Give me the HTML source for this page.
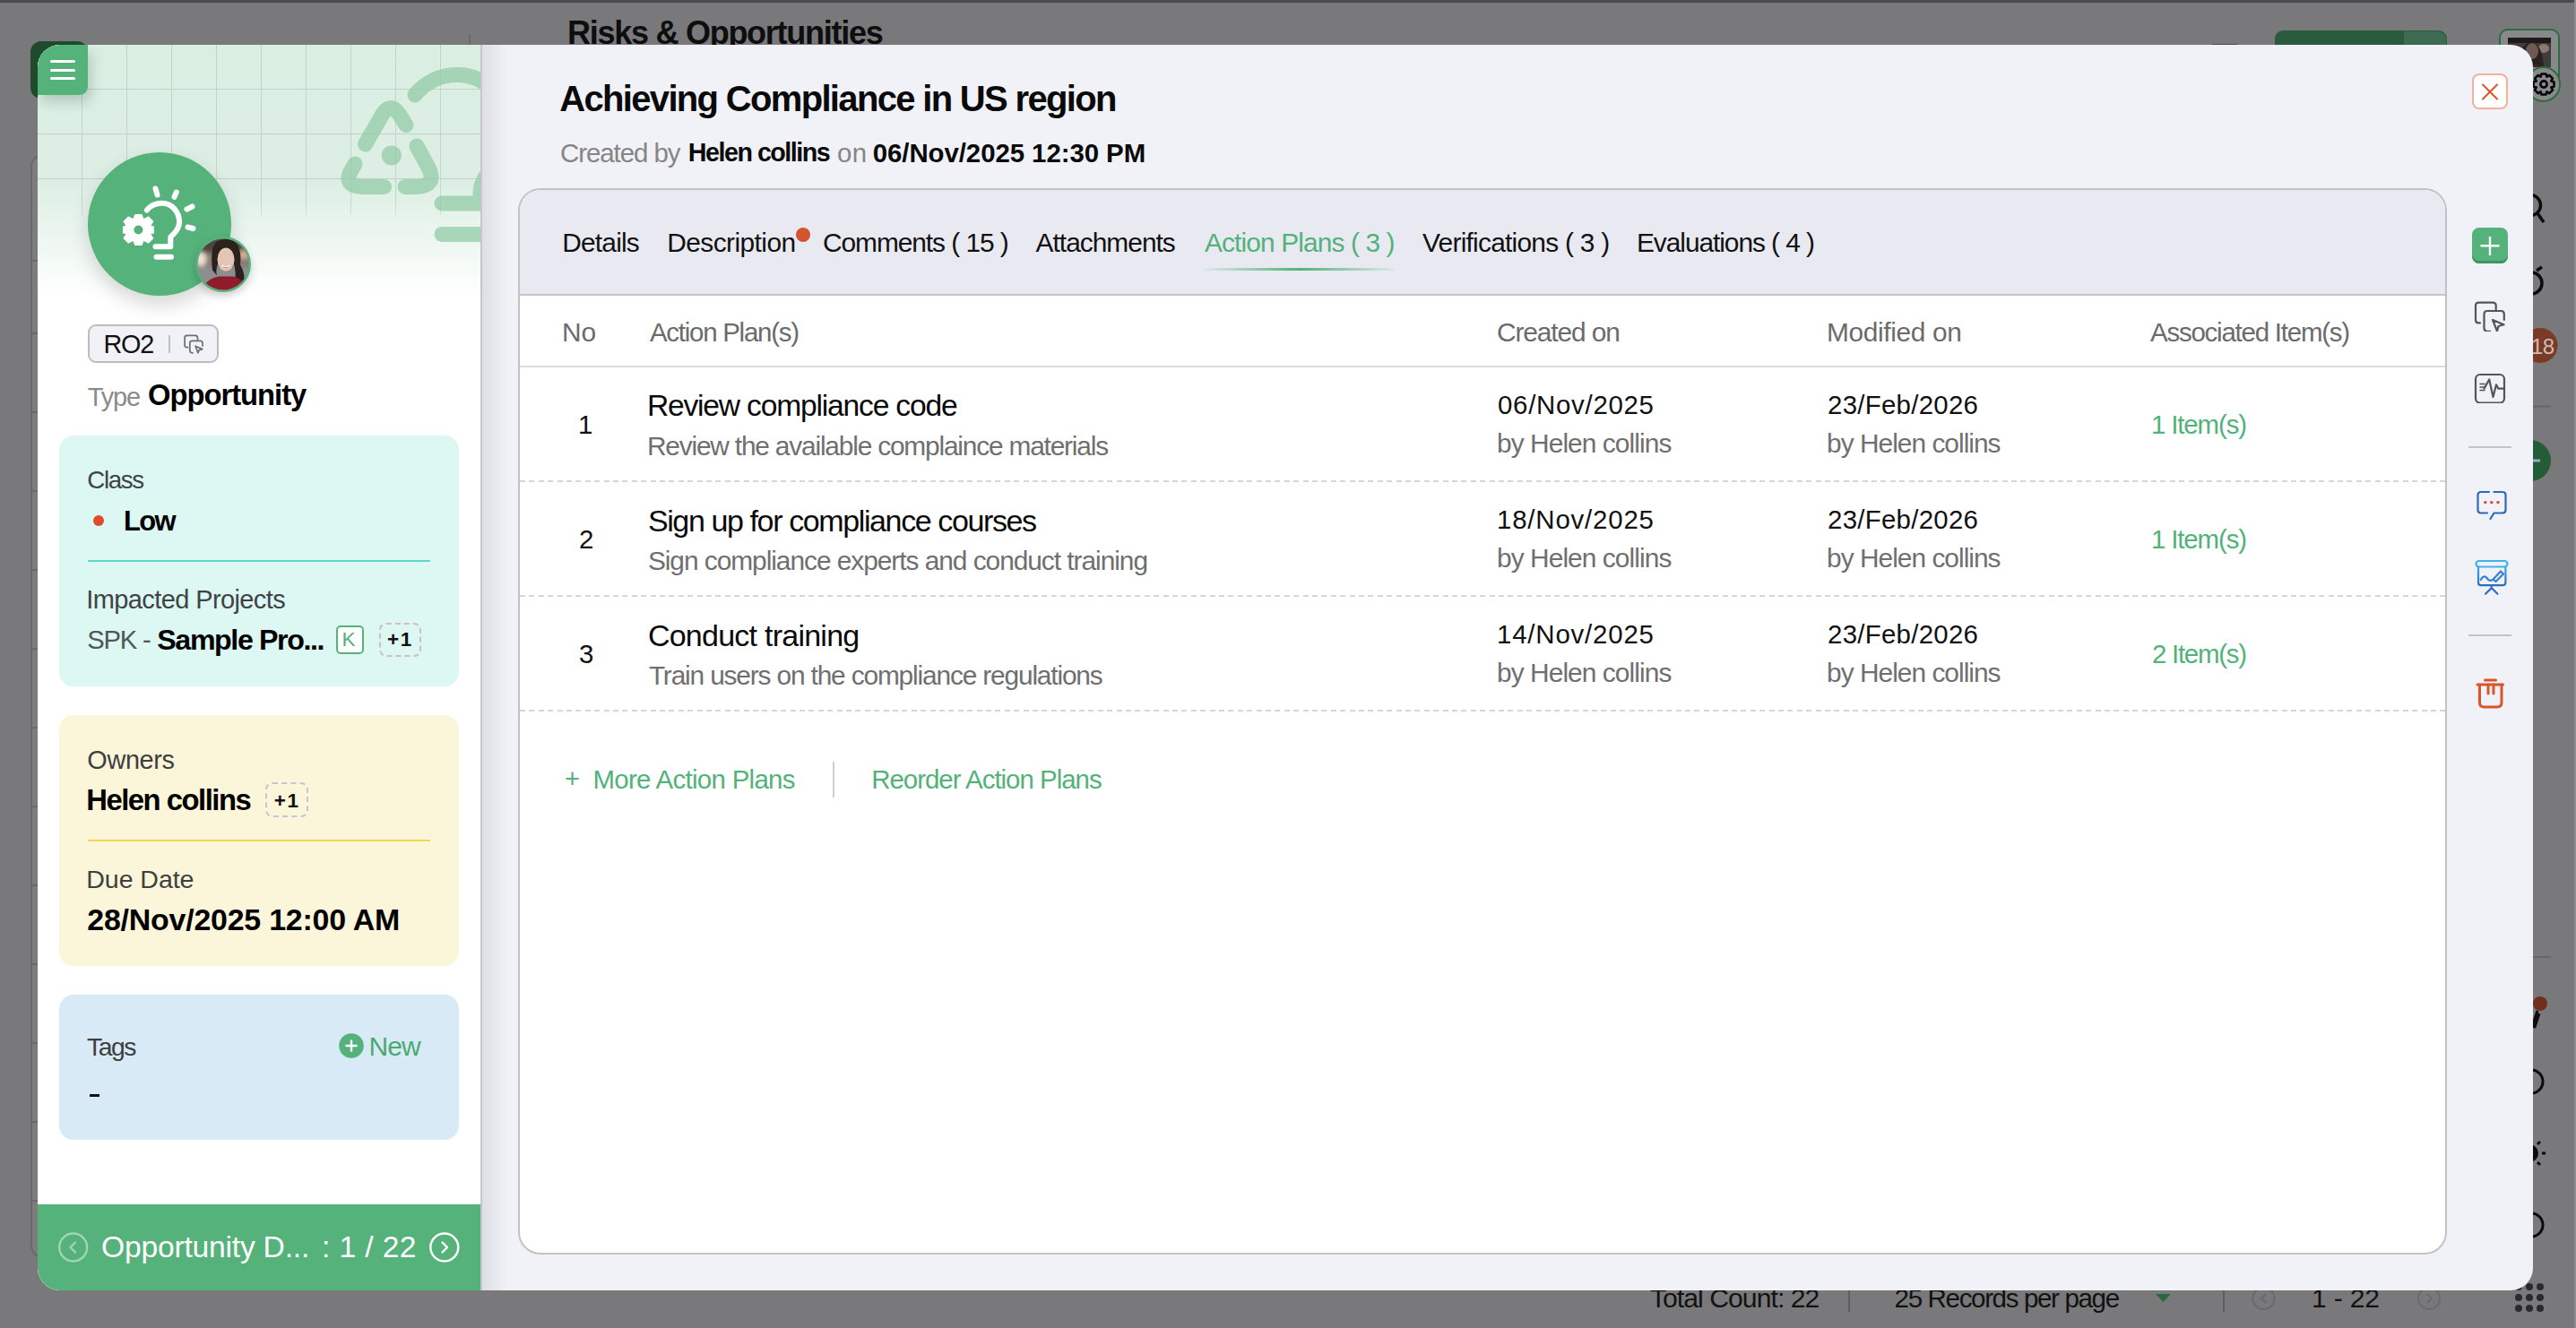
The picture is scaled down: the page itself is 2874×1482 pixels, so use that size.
<!DOCTYPE html>
<html><head><meta charset="utf-8">
<style>
html,body{margin:0;padding:0;}
body{width:2874px;height:1482px;overflow:hidden;position:relative;background:#79797b;font-family:"Liberation Sans",sans-serif;}
.a{position:absolute;}
.tx{position:absolute;white-space:nowrap;line-height:1;font-family:"Liberation Sans", sans-serif;}
</style></head><body>
<!-- ===== page behind overlay ===== -->
<div class="a" style="left:0;top:0;width:2874px;height:2.5px;background:#4a4a4c"></div>
<div class="a" style="left:2872px;top:0;width:2px;height:1482px;background:#8e8e90"></div>
<div class="a" style="left:523px;top:38px;width:2px;height:14px;background:#6a6a6c"></div>
<div class="a" style="left:34px;top:46px;width:64px;height:64px;border-radius:12px;background:#1f4a2b"></div>
<div class="a" style="left:34px;top:172px;width:40px;height:1232px;border:2px solid #6a6a6c;border-right:none;border-radius:14px 0 0 14px;background:#7d7d7f;box-sizing:border-box"></div>
<div class="a" style="left:36px;top:290px;width:10px;height:2px;background:#6a6a6c"></div>
<div class="a" style="left:36px;top:371px;width:10px;height:2px;background:#6a6a6c"></div>
<div class="a" style="left:36px;top:459px;width:10px;height:2px;background:#6a6a6c"></div>
<div class="a" style="left:36px;top:547px;width:10px;height:2px;background:#6a6a6c"></div>
<div class="a" style="left:36px;top:635px;width:10px;height:2px;background:#6a6a6c"></div>
<div class="a" style="left:36px;top:723px;width:10px;height:2px;background:#6a6a6c"></div>
<div class="a" style="left:36px;top:811px;width:10px;height:2px;background:#6a6a6c"></div>
<div class="a" style="left:36px;top:899px;width:10px;height:2px;background:#6a6a6c"></div>
<div class="a" style="left:36px;top:987px;width:10px;height:2px;background:#6a6a6c"></div>
<div class="a" style="left:36px;top:1075px;width:10px;height:2px;background:#6a6a6c"></div>
<div class="a" style="left:36px;top:1163px;width:10px;height:2px;background:#6a6a6c"></div>
<div class="a" style="left:36px;top:1251px;width:10px;height:2px;background:#6a6a6c"></div>
<div class="a" style="left:36px;top:1339px;width:10px;height:2px;background:#6a6a6c"></div>
<div class="a" style="left:2538px;top:34px;width:192px;height:30px;border-radius:9px;background:#2b5b3d"></div>
<div class="a" style="left:2682px;top:35px;width:47px;height:30px;border-radius:0 9px 0 0;background:#3e6a52"></div>
<div class="a" style="left:2788px;top:32px;width:68px;height:70px;border:2.3px solid #2d6b43;border-radius:10px;background:#89898b;box-sizing:border-box"></div>
<svg class="a" style="left:2798px;top:42px" width="48" height="33" viewBox="0 0 48 33">
 <rect width="48" height="33" fill="#3e3c3c"/><rect y="0" width="48" height="6" fill="#1e1a1a"/>
 <ellipse cx="40" cy="12" rx="6" ry="5" fill="#8a7a70"/>
 <path d="M14 33 Q12 6 26 5 Q38 6 40 33Z" fill="#2a201d"/>
 <ellipse cx="27" cy="15" rx="7" ry="9" fill="#6e5a52"/>
 <path d="M18 33 Q27 26 38 33Z" fill="#4a1e22"/>
</svg>
<div class="a" style="left:2818px;top:74.4px;width:39.2px;height:39.2px;border:2.3px solid #2d6b43;border-radius:50%;background:#89898b;box-sizing:border-box"></div>
<svg class="a" style="left:2824px;top:80px" width="28" height="28" viewBox="-14 -14 28 28" fill="none" stroke="#050505" stroke-width="2.6" stroke-linejoin="round">
 <path d="M-2.6 -11.5L2.6 -11.5L3.4 -8.4L6.3 -10.1L10 -6.4L8.3 -3.5L11.5 -2.6L11.5 2.6L8.3 3.5L10 6.4L6.3 10.1L3.4 8.4L2.6 11.5L-2.6 11.5L-3.4 8.4L-6.3 10.1L-10 6.4L-8.3 3.5L-11.5 2.6L-11.5 -2.6L-8.3 -3.5L-10 -6.4L-6.3 -10.1L-3.4 -8.4Z" transform="translate(0 0)"/>
 <circle cx="0" cy="0" r="3.6"/>
</svg>
<!-- right page icons -->
<svg class="a" style="left:2800px;top:200px" width="74" height="600" viewBox="2800 200 74 600" fill="none" stroke="#0c0c0c" stroke-width="3.5">
 <circle cx="2823" cy="229" r="11.5"/><path d="M2831 238l7 10"/>
 <circle cx="2824" cy="316" r="12"/><path d="M2830 302l6-4"/>
 <circle cx="2834" cy="385.5" r="19.5" fill="#7a3a26" stroke="none"/>
 <path d="M2826 453.5h20" stroke="#666" stroke-width="2"/>
 <circle cx="2823" cy="514" r="23" fill="#255c38" stroke="none"/>
 <path d="M2822 514h12" stroke="#9ab" stroke-width="3"/>
</svg>
<div class="a" style="left:2824px;top:375px;font-size:24px;color:#cdbdb5;line-height:1;letter-spacing:-0.5px">18</div>
<svg class="a" style="left:2800px;top:1050px" width="74" height="432" viewBox="2800 1050 74 432" fill="none" stroke="#0c0c0c" stroke-width="3">
 <path d="M2826 1068h20" stroke="#666" stroke-width="2"/>
 <circle cx="2834" cy="1120" r="8" fill="#6f2f1c" stroke="none"/>
 <path d="M2831 1128l-5 15q-1 3 2 3l5-15"/>
 <circle cx="2824" cy="1207" r="13"/>
 <circle cx="2822" cy="1287" r="10" fill="#0c0c0c" stroke="none"/><path d="M2836 1287h4M2831 1277l3-3M2831 1297l3 3"/>
 <circle cx="2824" cy="1367" r="13"/>
 <g fill="#2a2a2a" stroke="none"><circle cx="2810" cy="1436" r="4"/><circle cx="2822" cy="1436" r="4"/><circle cx="2834" cy="1436" r="4"/><circle cx="2810" cy="1448" r="4"/><circle cx="2822" cy="1448" r="4"/><circle cx="2834" cy="1448" r="4"/><circle cx="2810" cy="1460" r="4"/><circle cx="2822" cy="1460" r="4"/><circle cx="2834" cy="1460" r="4"/></g>
</svg>
<!-- bottom page bar -->
<div class="a" style="left:2062px;top:1440px;width:2px;height:24px;background:#5f5f61"></div>
<div class="a" style="left:2480px;top:1440px;width:2px;height:24px;background:#5f5f61"></div>
<svg class="a" style="left:2400px;top:1440px" width="30" height="20"><path d="M5 4h17l-8.5 9z" fill="#256a3c"/></svg>
<svg class="a" style="left:2505px;top:1430px" width="220" height="40" viewBox="2505 1430 220 40" fill="none" stroke="#6a6a6c" stroke-width="2"><circle cx="2525.5" cy="1449" r="12"/><path d="M2528 1444l-5 5 5 5"/><circle cx="2710" cy="1449" r="12"/><path d="M2708 1444l5 5-5 5"/></svg>
<div class="a" style="left:2468px;top:48.5px;width:28px;height:2px;background:#4a4a4c"></div>
<div id='t0' class='tx' style='left:633.00px;top:18.84px;font-size:36.07px;font-weight:700;letter-spacing:-1.300px;color:#0e0e0e;'>Risks &amp; Opportunities</div>
<div id='t64' class='tx' style='left:1840.90px;top:1433.98px;font-size:30.14px;font-weight:400;letter-spacing:-0.943px;color:#121212;'>Total Count: 22</div>
<div id='t65' class='tx' style='left:2113.60px;top:1434.46px;font-size:29.57px;font-weight:400;letter-spacing:-1.367px;color:#121212;'>25 Records per page</div>
<div id='t66' class='tx' style='left:2578.90px;top:1433.98px;font-size:30.14px;font-weight:400;letter-spacing:-0.160px;color:#121212;'>1 - 22</div>

<!-- ===== modal ===== -->
<div class="a" id="modal" style="left:42px;top:50px;width:2784px;height:1390px;border-radius:25px;overflow:hidden;background:#f1f2f7">
  <!-- left panel -->
  <div class="a" style="left:0;top:0;width:494px;height:1390px;background:#fff">
    <div class="a" style="left:0;top:0;width:494px;height:282px;background:linear-gradient(180deg,#dbeee2 0%,#ddefe4 55%,#ffffff 100%)"></div>
    <svg class="a" style="left:0;top:0" width="494" height="200">
      <defs><linearGradient id="gf" x1="0" y1="0" x2="0" y2="1"><stop offset="0" stop-color="#c2d2c7"/><stop offset="0.9" stop-color="#c6d6cb"/><stop offset="1" stop-color="#d0ded4"/></linearGradient></defs>
      <g fill="url(#gf)">
        <rect x="49" y="0" width="1" height="190"/><rect x="99" y="0" width="1" height="190"/><rect x="149" y="0" width="1" height="190"/><rect x="199" y="0" width="1" height="190"/><rect x="249" y="0" width="1" height="190"/><rect x="299" y="0" width="1" height="190"/><rect x="349" y="0" width="1" height="190"/><rect x="399" y="0" width="1" height="190"/><rect x="449" y="0" width="1" height="190"/>
      </g>
      <g fill="#c2d2c7"><rect x="0" y="49" width="494" height="1"/><rect x="0" y="99" width="494" height="1"/><rect x="0" y="149" width="494" height="1"/></g>
    </svg>
    <!-- decorative icon -->
    <svg class="a" style="left:0;top:0" width="494" height="290" viewBox="42 50 494 290" fill="none" stroke="#8fcba4" stroke-width="17" stroke-linecap="round" stroke-linejoin="round" opacity="0.72">
      <path d="M407.5 161 L427 127 Q436 114 445 127 L453 139.5"/>
      <path d="M465 163 L479 189 Q487 208 464 208.5 L452 208.5"/>
      <path d="M396 183 L392 190 Q382 208 405 208.5 L428.5 208.5"/>
      <circle cx="436.8" cy="173.4" r="11" fill="#8fcba4" stroke="none"/>
      <path d="M463 106 A59 59 0 0 1 560 112"/>
      <path d="M493 227 L540 227"/>
      <path d="M493 261.5 L540 261.5"/>
      <path d="M536 224 L536 215 Q536 200 552 186"/>
    </svg>
    <!-- menu button -->
    <div class="a" style="left:0;top:0;width:56px;height:56px;background:#55b27b;border-radius:24px 0 9px 0;box-shadow:4px 8px 14px rgba(0,40,20,0.18)">
      <div class="a" style="left:14px;top:17px;width:28px;height:3px;border-radius:2px;background:#fff"></div>
      <div class="a" style="left:14px;top:26.5px;width:28px;height:3px;border-radius:2px;background:#fff"></div>
      <div class="a" style="left:14px;top:36px;width:28px;height:3px;border-radius:2px;background:#fff"></div>
    </div>
    <!-- big circle -->
    <div class="a" style="left:56px;top:120px;width:160px;height:160px;border-radius:50%;background:#55b27b;box-shadow:0 10px 22px rgba(0,0,0,0.16)"></div>
    <svg class="a" style="left:56px;top:120px" width="160" height="160" viewBox="98 170 160 160" fill="none" stroke="#fff" stroke-width="6" stroke-linecap="round" stroke-linejoin="round">
      <path d="M163.9 234.6 C168 229 174 226.7 180.8 226.7 C191.5 226.7 200.1 236 200.1 248.1 C200.1 255 196 259.5 190.3 264.4 L190.3 275.2 L173.4 275.2"/>
      <path d="M174.5 286.8 L191 286.8"/>
      <path d="M173.5 210.5 L175.5 217.5"/><path d="M196.8 214.5 L194.5 219.8"/><path d="M214.5 230.5 L208.5 233.5"/><path d="M215.5 255 L209.5 253.5"/>
      <g stroke="none" fill="#fff" transform="translate(154.4 256.5)">
        <path d="M-4 -17.5 L4 -17.5 L6 -12.5 L11.3 -15.2 L17 -9.5 L14 -4.6 L17.5 -4 L17.5 4 L14 4.6 L17 9.5 L11.3 15.2 L6 12.5 L4 17.5 L-4 17.5 L-6 12.5 L-11.3 15.2 L-17 9.5 L-14 4.6 L-17.5 4 L-17.5 -4 L-14 -4.6 L-17 -9.5 L-11.3 -15.2 L-6 -12.5 Z"/>
      </g>
      <circle cx="154.4" cy="256.5" r="5" fill="#55b27b" stroke="none"/>
    </svg>
    <!-- avatar -->
    <div class="a" style="left:175.7px;top:213.7px;width:62.2px;height:62.2px;border-radius:50%;background:#55b27b;box-shadow:0 4px 10px rgba(0,0,0,0.2);overflow:hidden">
      <svg width="62" height="62" viewBox="0 0 62 62">
        <defs><clipPath id="av"><circle cx="31" cy="31" r="28.5"/></clipPath><filter id="bl" x="-20%" y="-20%" width="140%" height="140%"><feGaussianBlur stdDeviation="2.5"/></filter><filter id="bl2"><feGaussianBlur stdDeviation="0.7"/></filter></defs>
        <g clip-path="url(#av)">
          <rect width="62" height="62" fill="#8c8a88"/>
          <g filter="url(#bl)">
            <rect x="0" y="0" width="62" height="18" fill="#4e4240"/>
            <rect x="0" y="18" width="62" height="16" fill="#8a7c74"/>
            <ellipse cx="6" cy="25" rx="6" ry="8" fill="#eee2d0"/>
            <ellipse cx="54" cy="20" rx="7" ry="5" fill="#d8ae8c"/>
            <rect x="0" y="34" width="62" height="28" fill="#8e8e90"/>
          </g>
          <g filter="url(#bl2)" transform="translate(0 -2.5)">
            <path d="M19 40 Q16 14 24 8 Q34 3 44 8 Q52 16 50 34 Q56 44 54 54 L44 52 Q46 40 42 30 L26 30 Q22 40 24 46 Z" fill="#2b201d"/>
            <ellipse cx="34" cy="28" rx="9.5" ry="13" fill="#e4c4b2"/>
            <path d="M28 34 Q34 40 40 34 Q34 36 28 34Z" fill="#c0283a"/>
            <path d="M29 34.5 Q34 37 39 34.5" stroke="#fff" stroke-width="1.4" fill="none"/>
            <path d="M6 66 Q10 50 26 47 L42 47 Q56 50 60 66Z" fill="#8e1b2a"/>
          </g>
        </g>
      </svg>
    </div>
    <!-- RO2 badge -->
    <div class="a" style="left:56px;top:312px;width:146px;height:43px;border:2px solid #bdbdbf;border-radius:9px;background:#f1f2f7;box-sizing:border-box"></div>
    <div class="a" style="left:146px;top:324px;width:2px;height:20px;background:#c2c2c4"></div>
    <svg class="a" style="left:160px;top:322px" width="28" height="26" viewBox="0 0 28 26" fill="none" stroke="#6e6e72" stroke-width="1.7" stroke-linejoin="round" stroke-linecap="round">
      <path d="M7.5 15.7H6.8Q4.1 15.7 4.1 13V5Q4.1 2.3 6.8 2.3H15.8Q18.5 2.3 18.5 5V7"/>
      <path d="M13 21.8H12.5Q9.8 21.8 9.8 19.1V11.1Q9.8 8.4 12.5 8.4H21.3Q24 8.4 24 11.1V14"/>
      <path d="M16.1 14.2L23.7 17.6L20.2 18.6L18.8 21.8Z"/>
    </svg>
    <!-- cards -->
    <div class="a" style="left:24px;top:436px;width:446px;height:280px;border-radius:16px;background:#ddf7f2"></div>
    <div class="a" style="left:56px;top:574.5px;width:382px;height:2.4px;background:#5bd8c8"></div>
    <div class="a" style="left:61.8px;top:524.9px;width:12px;height:12px;border-radius:50%;background:#dd4a2e"></div>
    <div class="a" style="left:332.5px;top:648.4px;width:31.3px;height:31.3px;border:2px solid #55b27b;border-radius:5px;background:#fff;box-sizing:border-box"></div>
    <div class="a" style="left:380.6px;top:644.7px;width:47px;height:38.7px;border:2px dashed #cdbfc4;border-radius:8px;box-sizing:border-box"></div>
    <div class="a" style="left:24px;top:748px;width:446px;height:280px;border-radius:16px;background:#fbf5d9"></div>
    <div class="a" style="left:56px;top:886.8px;width:382px;height:2.4px;background:#f0d75a"></div>
    <div class="a" style="left:254px;top:823.4px;width:48px;height:38.9px;border:2px dashed #c4c6d0;border-radius:8px;box-sizing:border-box"></div>
    <div class="a" style="left:24px;top:1060px;width:446px;height:161.5px;border-radius:16px;background:#d9eaf7"></div>
    <svg class="a" style="left:336px;top:1103px" width="28" height="28" viewBox="0 0 28 28"><circle cx="14" cy="14" r="13.8" fill="#55b27b"/><path d="M14 7.5v13M7.5 14h13" stroke="#fff" stroke-width="2.4"/></svg>
    <div class="a" style="left:57.8px;top:1170.5px;width:11px;height:3.2px;background:#111"></div>
    <!-- footer -->
    <div class="a" style="left:0;top:1294px;width:494px;height:96px;background:#55b27b"></div>
    <svg class="a" style="left:0;top:1294px" width="494" height="96" viewBox="42 1344 494 96" fill="none" stroke-width="2.4" stroke-linecap="round" stroke-linejoin="round">
      <circle cx="81.7" cy="1392" r="15.5" stroke="#ffffff" stroke-opacity="0.45"/><path d="M84 1386.5l-5.5 5.5 5.5 5.5" stroke="#ffffff" stroke-opacity="0.45"/>
      <circle cx="495.8" cy="1392" r="15.5" stroke="#fff"/><path d="M493.5 1386.5l5.5 5.5-5.5 5.5" stroke="#fff"/>
    </svg>
  </div>
  <!-- divider + shadow -->
  <div class="a" style="left:494px;top:0;width:2px;height:1390px;background:#c6c6ca"></div>
  <div class="a" style="left:496px;top:0;width:30px;height:1390px;background:linear-gradient(90deg,rgba(170,172,185,0.26),rgba(241,242,247,0))"></div>
  <!-- close -->
  <div class="a" style="left:2716px;top:32px;width:40px;height:39.5px;border:2px solid #f2b19c;border-radius:8px;background:#fff;box-sizing:border-box"></div>
  <svg class="a" style="left:2716px;top:32px" width="40" height="40"><path d="M12 12.5L28 28.5M28 12.5L12 28.5" stroke="#d9532b" stroke-width="2" stroke-linecap="round"/></svg>
  <!-- tab container -->
  <div class="a" style="left:536px;top:160px;width:2152px;height:1190px;border:2px solid #c2c2c6;border-radius:25px;background:#fff;box-sizing:border-box;overflow:hidden">
    <div class="a" style="left:0;top:0;width:2151px;height:116px;background:#e9e9f2;border-bottom:2px solid #c6c6ca"></div>
    <div class="a" style="left:763px;top:87px;width:213px;height:3px;border-radius:2px;background:linear-gradient(90deg,rgba(82,178,122,0.05),#52b27a 50%,rgba(82,178,122,0.05))"></div>
    <div class="a" style="left:0;top:196px;width:2151px;height:2px;background:#dcdcde"></div>
    <div class="a" style="left:0;top:324px;width:2151px;height:2px;background:repeating-linear-gradient(90deg,#d6d6d8 0 6px,transparent 6px 10.4px)"></div>
    <div class="a" style="left:0;top:452px;width:2151px;height:2px;background:repeating-linear-gradient(90deg,#d6d6d8 0 6px,transparent 6px 10.4px)"></div>
    <div class="a" style="left:0;top:580px;width:2151px;height:2px;background:repeating-linear-gradient(90deg,#d6d6d8 0 6px,transparent 6px 10.4px)"></div>
    <div class="a" style="left:349px;top:638px;width:2px;height:40px;background:#cfcfd2"></div>
  </div>
  <div class="a" style="left:846px;top:204px;width:16px;height:16px;border-radius:50%;background:#d05530"></div>
  <!-- right toolbar -->
  <div class="a" style="left:2716px;top:204px;width:40px;height:40px;border-radius:8px;background:#55b27b;box-shadow:inset 0 -3px 0 #3f9463"></div>
  <svg class="a" style="left:2716px;top:204px" width="40" height="40"><path d="M20 10v21M9.5 20.3h21" stroke="#fff" stroke-width="2.4"/></svg>
  <svg class="a" style="left:2716px;top:280px" width="40" height="40" viewBox="2758 330 40 40" fill="none" stroke="#555558" stroke-width="2.2" stroke-linejoin="round" stroke-linecap="round">
    <path d="M2767 360.4H2765.5Q2762 360.4 2762 357V341Q2762 337.6 2765.5 337.6H2781Q2784.7 337.6 2784.7 341V346"/>
    <path d="M2778 369.8H2775Q2771.5 369.8 2771.5 366.3V350.5Q2771.5 347 2775 347H2790.3Q2793.8 347 2793.8 350.5V357"/>
    <path d="M2781 357L2793.5 362.3L2787.5 364L2786 369.5Z"/>
  </svg>
<svg class="a" style="left:2716px;top:360px" width="40" height="40" viewBox="2758 410 40 40" fill="none" stroke="#555558" stroke-width="2.2" stroke-linejoin="round" stroke-linecap="round">
    <rect x="2762" y="418" width="32" height="31.6" rx="5"/>
    <path d="M2767 428.5h5M2767 432h5M2767 435.5h5" stroke-width="1.6"/>
    <path d="M2771.5 433.6L2777.2 423.5L2781.5 443L2785 429.3L2787.2 433.6H2793"/>
  </svg>
  <div class="a" style="left:2712px;top:448px;width:48px;height:2px;background:#c4c4c6"></div>
  <svg class="a" style="left:2716px;top:492px" width="40" height="40" viewBox="2758 542 40 40" fill="none" stroke-width="2.2" stroke-linejoin="round" stroke-linecap="round">
    <path d="M2777 549H2768Q2764.5 549 2764.5 552.5V569Q2764.5 572.5 2768 572.5H2775M2782.5 549H2792Q2795.5 549 2795.5 552.5V569Q2795.5 572.5 2792 572.5H2782.5L2778.5 579" stroke="#2e68b8"/>
    <g fill="#e03b3b" stroke="none"><circle cx="2772.8" cy="560.6" r="1.7"/><circle cx="2779.8" cy="560.6" r="1.7"/><circle cx="2787" cy="560.6" r="1.7"/></g>
  </svg>
  <svg class="a" style="left:2716px;top:570px" width="45" height="45" viewBox="2758 620 45 45" fill="none" stroke-width="2.2" stroke-linejoin="round" stroke-linecap="round">
    <defs><linearGradient id="pg" x1="0" y1="0" x2="0" y2="1"><stop offset="0" stop-color="#3da8e6"/><stop offset="1" stop-color="#2f6cc4"/></linearGradient></defs>
    <rect x="2762.5" y="626" width="35" height="6.5" rx="3.2" stroke="#3fb2ea"/>
    <path d="M2765 632.7V650Q2765 653.1 2768 653.1H2792.4Q2795.4 653.1 2795.4 650V632.7" stroke="url(#pg)"/>
    <path d="M2767.7 647.1Q2771 641 2774.5 645Q2778 650 2781.6 646.5" stroke="#3480cc"/>
    <path d="M2781.6 646.5L2790 637.5L2793 640.5L2784.5 649Z" stroke="#3480cc"/>
    <path d="M2779.8 653.1V656.1L2773 662.8M2779.8 656.1L2786.4 662.8" stroke="#2f6cc4"/>
  </svg>
  <div class="a" style="left:2712px;top:657.5px;width:48px;height:2px;background:#c4c4c6"></div>
  <svg class="a" style="left:2716px;top:704px" width="40" height="40" viewBox="2758 754 40 40" fill="none" stroke="#d9552b" stroke-width="3" stroke-linejoin="round" stroke-linecap="round">
    <path d="M2764 764h28.5"/><path d="M2772.5 759h12"/><path d="M2766.5 764v20q0 5 5 5h14.5q5 0 5-5v-20"/><path d="M2776 764v10M2782 764v10"/>
  </svg>
</div>
<div id='t1' class='tx' style='left:115.60px;top:370.42px;font-size:28.80px;font-weight:400;letter-spacing:-1.300px;color:#111;'>RO2</div>
<div id='t2' class='tx' style='left:97.80px;top:428.70px;font-size:28.94px;font-weight:400;letter-spacing:-1.133px;color:#8b8b8b;'>Type</div>
<div id='t3' class='tx' style='left:165.10px;top:425.46px;font-size:32.75px;font-weight:700;letter-spacing:-1.020px;color:#000;'>Opportunity</div>
<div id='t4' class='tx' style='left:97.30px;top:521.95px;font-size:27.71px;font-weight:400;letter-spacing:-1.350px;color:#3e4444;'>Class</div>
<div id='t5' class='tx' style='left:137.90px;top:566.91px;font-size:30.93px;font-weight:700;letter-spacing:-1.600px;color:#000;'>Low</div>
<div id='t6' class='tx' style='left:96.30px;top:654.56px;font-size:28.99px;font-weight:400;letter-spacing:-0.600px;color:#3e4444;'>Impacted Projects</div>
<div id='t7' class='tx' style='left:97.30px;top:700.48px;font-size:29.20px;font-weight:400;letter-spacing:-1.200px;color:#4f5757;'>SPK -</div>
<div id='t8' class='tx' style='left:175.30px;top:697.94px;font-size:32.18px;font-weight:700;letter-spacing:-1.383px;color:#000;'>Sample Pro...</div>
<div id='t9' class='tx' style='left:432.00px;top:702.91px;font-size:22.46px;font-weight:700;letter-spacing:1.600px;color:#111;'>+1</div>
<div id='t10' class='tx' style='left:381.50px;top:702.91px;font-size:22.46px;font-weight:400;letter-spacing:0.000px;color:#52b27a;'>K</div>
<div id='t11' class='tx' style='left:97.30px;top:833.89px;font-size:28.84px;font-weight:400;letter-spacing:-0.320px;color:#3e4040;'>Owners</div>
<div id='t12' class='tx' style='left:96.30px;top:877.23px;font-size:32.79px;font-weight:700;letter-spacing:-1.483px;color:#000;'>Helen collins</div>
<div id='t13' class='tx' style='left:305.80px;top:882.71px;font-size:22.46px;font-weight:700;letter-spacing:1.600px;color:#111;'>+1</div>
<div id='t14' class='tx' style='left:96.30px;top:966.73px;font-size:28.55px;font-weight:400;letter-spacing:-0.057px;color:#3e4040;'>Due Date</div>
<div id='t15' class='tx' style='left:97.30px;top:1009.57px;font-size:33.91px;font-weight:700;letter-spacing:-0.211px;color:#000;'>28/Nov/2025 12:00 AM</div>
<div id='t16' class='tx' style='left:97.00px;top:1154.48px;font-size:28.38px;font-weight:400;letter-spacing:-1.533px;color:#3e4040;'>Tags</div>
<div id='t17' class='tx' style='left:411.60px;top:1153.10px;font-size:30.00px;font-weight:400;letter-spacing:-1.000px;color:#4aaa6e;'>New</div>
<div id='t18' class='tx' style='left:113.10px;top:1375.02px;font-size:33.62px;font-weight:500;letter-spacing:-0.213px;color:#ffffff;'>Opportunity D...</div>
<div id='t19' class='tx' style='left:359.00px;top:1375.02px;font-size:33.62px;font-weight:500;letter-spacing:0.400px;color:#ffffff;'>: 1 / 22</div>
<div id='t20' class='tx' style='left:624.30px;top:90.00px;font-size:40.00px;font-weight:700;letter-spacing:-1.675px;color:#0a0a0a;'>Achieving Compliance in US region</div>
<div id='t21' class='tx' style='left:625.00px;top:155.69px;font-size:29.42px;font-weight:400;letter-spacing:-1.044px;color:#858585;'>Created by</div>
<div id='t22' class='tx' style='left:767.80px;top:156.33px;font-size:28.67px;font-weight:700;letter-spacing:-1.483px;color:#0a0a0a;'>Helen collins</div>
<div id='t23' class='tx' style='left:934.10px;top:155.69px;font-size:29.42px;font-weight:400;letter-spacing:0.400px;color:#858585;'>on</div>
<div id='t24' class='tx' style='left:973.70px;top:155.69px;font-size:29.42px;font-weight:600;letter-spacing:-0.063px;color:#0a0a0a;'>06/Nov/2025 12:30 PM</div>
<div id='t25' class='tx' style='left:627.30px;top:255.62px;font-size:29.86px;font-weight:400;letter-spacing:-0.800px;color:#111;'>Details</div>
<div id='t26' class='tx' style='left:744.30px;top:255.62px;font-size:29.86px;font-weight:400;letter-spacing:-0.560px;color:#111;'>Description</div>
<div id='t27' class='tx' style='left:918.00px;top:255.62px;font-size:29.86px;font-weight:400;letter-spacing:-1.043px;color:#111;'>Comments ( 15 )</div>
<div id='t28' class='tx' style='left:1155.60px;top:255.62px;font-size:29.86px;font-weight:400;letter-spacing:-0.980px;color:#111;'>Attachments</div>
<div id='t29' class='tx' style='left:1344.00px;top:255.62px;font-size:29.86px;font-weight:400;letter-spacing:-0.871px;color:#52b27a;'>Action Plans ( 3 )</div>
<div id='t30' class='tx' style='left:1587.10px;top:255.62px;font-size:29.86px;font-weight:400;letter-spacing:-0.744px;color:#111;'>Verifications ( 3 )</div>
<div id='t31' class='tx' style='left:1826.00px;top:255.62px;font-size:29.86px;font-weight:400;letter-spacing:-1.050px;color:#111;'>Evaluations ( 4 )</div>
<div id='t32' class='tx' style='left:627.00px;top:355.62px;font-size:29.86px;font-weight:400;letter-spacing:0.000px;color:#6b6b6b;'>No</div>
<div id='t33' class='tx' style='left:724.90px;top:355.96px;font-size:29.46px;font-weight:400;letter-spacing:-1.246px;color:#6b6b6b;'>Action Plan(s)</div>
<div id='t34' class='tx' style='left:1670.00px;top:355.62px;font-size:29.86px;font-weight:400;letter-spacing:-1.111px;color:#6b6b6b;'>Created on</div>
<div id='t35' class='tx' style='left:2038.00px;top:355.62px;font-size:29.86px;font-weight:400;letter-spacing:-0.360px;color:#6b6b6b;'>Modified on</div>
<div id='t36' class='tx' style='left:2399.00px;top:355.94px;font-size:29.49px;font-weight:400;letter-spacing:-1.235px;color:#6b6b6b;'>Associated Item(s)</div>
<div id='t37' class='tx' style='left:645.00px;top:459.49px;font-size:29.42px;font-weight:400;letter-spacing:0.000px;color:#111;'>1</div>
<div id='t38' class='tx' style='left:721.90px;top:436.01px;font-size:33.63px;font-weight:400;letter-spacing:-1.200px;color:#0a0a0a;'>Review compliance code</div>
<div id='t39' class='tx' style='left:721.90px;top:482.62px;font-size:29.86px;font-weight:400;letter-spacing:-1.185px;color:#6f6f6f;'>Review the available complaince materials</div>
<div id='t40' class='tx' style='left:1671.00px;top:436.79px;font-size:29.42px;font-weight:400;letter-spacing:0.720px;color:#111;'>06/Nov/2025</div>
<div id='t41' class='tx' style='left:1670.00px;top:479.62px;font-size:29.86px;font-weight:400;letter-spacing:-0.920px;color:#6f6f6f;'>by Helen collins</div>
<div id='t42' class='tx' style='left:2039.00px;top:436.79px;font-size:29.42px;font-weight:400;letter-spacing:0.280px;color:#111;'>23/Feb/2026</div>
<div id='t43' class='tx' style='left:2038.00px;top:479.62px;font-size:29.86px;font-weight:400;letter-spacing:-0.973px;color:#6f6f6f;'>by Helen collins</div>
<div id='t44' class='tx' style='left:2400.00px;top:458.99px;font-size:29.42px;font-weight:400;letter-spacing:-1.125px;color:#52b27a;'>1 Item(s)</div>
<div id='t45' class='tx' style='left:646.00px;top:587.49px;font-size:29.42px;font-weight:400;letter-spacing:0.000px;color:#111;'>2</div>
<div id='t46' class='tx' style='left:722.90px;top:563.65px;font-size:34.06px;font-weight:400;letter-spacing:-1.407px;color:#0a0a0a;'>Sign up for compliance courses</div>
<div id='t47' class='tx' style='left:722.90px;top:610.62px;font-size:29.86px;font-weight:400;letter-spacing:-1.033px;color:#6f6f6f;'>Sign compliance experts and conduct training</div>
<div id='t48' class='tx' style='left:1670.00px;top:564.79px;font-size:29.42px;font-weight:400;letter-spacing:0.820px;color:#111;'>18/Nov/2025</div>
<div id='t49' class='tx' style='left:1670.00px;top:607.62px;font-size:29.86px;font-weight:400;letter-spacing:-0.920px;color:#6f6f6f;'>by Helen collins</div>
<div id='t50' class='tx' style='left:2039.00px;top:564.79px;font-size:29.42px;font-weight:400;letter-spacing:0.280px;color:#111;'>23/Feb/2026</div>
<div id='t51' class='tx' style='left:2038.00px;top:607.62px;font-size:29.86px;font-weight:400;letter-spacing:-0.973px;color:#6f6f6f;'>by Helen collins</div>
<div id='t52' class='tx' style='left:2400.00px;top:586.99px;font-size:29.42px;font-weight:400;letter-spacing:-1.125px;color:#52b27a;'>1 Item(s)</div>
<div id='t53' class='tx' style='left:646.00px;top:715.49px;font-size:29.42px;font-weight:400;letter-spacing:0.000px;color:#111;'>3</div>
<div id='t54' class='tx' style='left:722.90px;top:691.65px;font-size:34.06px;font-weight:400;letter-spacing:-0.773px;color:#0a0a0a;'>Conduct training</div>
<div id='t55' class='tx' style='left:723.90px;top:738.62px;font-size:29.86px;font-weight:400;letter-spacing:-1.160px;color:#6f6f6f;'>Train users on the compliance regulations</div>
<div id='t56' class='tx' style='left:1670.00px;top:692.79px;font-size:29.42px;font-weight:400;letter-spacing:0.820px;color:#111;'>14/Nov/2025</div>
<div id='t57' class='tx' style='left:1670.00px;top:735.62px;font-size:29.86px;font-weight:400;letter-spacing:-0.920px;color:#6f6f6f;'>by Helen collins</div>
<div id='t58' class='tx' style='left:2039.00px;top:692.79px;font-size:29.42px;font-weight:400;letter-spacing:0.280px;color:#111;'>23/Feb/2026</div>
<div id='t59' class='tx' style='left:2038.00px;top:735.62px;font-size:29.86px;font-weight:400;letter-spacing:-0.973px;color:#6f6f6f;'>by Helen collins</div>
<div id='t60' class='tx' style='left:2401.00px;top:714.99px;font-size:29.42px;font-weight:400;letter-spacing:-1.250px;color:#52b27a;'>2 Item(s)</div>
<div id='t61' class='tx' style='left:630.00px;top:855.36px;font-size:28.99px;font-weight:400;letter-spacing:0.000px;color:#52b27a;'>+</div>
<div id='t62' class='tx' style='left:661.50px;top:854.99px;font-size:29.42px;font-weight:400;letter-spacing:-0.688px;color:#52b27a;'>More Action Plans</div>
<div id='t63' class='tx' style='left:972.20px;top:854.99px;font-size:29.42px;font-weight:400;letter-spacing:-0.989px;color:#52b27a;'>Reorder Action Plans</div>
</body></html>
